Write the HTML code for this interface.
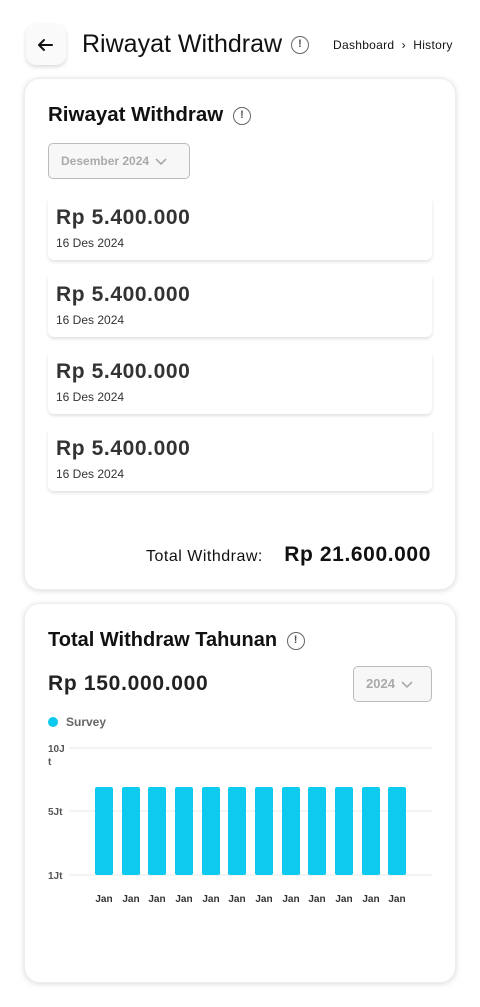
<!DOCTYPE html>
<html><head><meta charset="utf-8"><style>
*{box-sizing:border-box;margin:0;padding:0}
body{width:480px;height:1007px;background:#fff;font-family:"Liberation Sans",sans-serif;color:#222;position:relative;overflow:hidden}
.abs{position:absolute}
.card{position:absolute;left:24px;width:432px;background:#fff;border-radius:16px;box-shadow:0 1px 6px rgba(0,0,0,.15);border:1px solid #eee}
.info{display:inline-block;border:1.5px solid #666;border-radius:50%;text-align:center;color:#555;font-weight:bold;vertical-align:middle}
.item{position:absolute;left:48px;width:384px;height:64px;border-radius:6px;box-shadow:0 2px 3px rgba(0,0,0,.12)}
.item .a{position:absolute;left:8px;top:10px;font-size:21px;letter-spacing:0.6px;font-weight:bold;color:#333}
.item .d{position:absolute;left:8px;top:40px;font-size:12px;color:#333}
.sel{position:absolute;border:1px solid #bbb;border-radius:5px;background:#f7f7f8;color:#aaa;font-size:12px;font-weight:bold}
.sel svg{vertical-align:middle;margin-left:6px}
</style></head><body>
<div class="abs" style="left:26px;top:24px;width:40px;height:41px;border-radius:10px;background:#fafafa;box-shadow:0 2px 4px rgba(0,0,0,.15)">
<svg width="40" height="41" viewBox="0 0 40 41"><path d="M13 21h13M13 21l5-5M13 21l5 5" stroke="#111" stroke-width="2" fill="none" stroke-linecap="round"/></svg></div>
<div class="abs" style="left:82px;top:30px;font-size:25px;color:#111;white-space:nowrap">Riwayat Withdraw <span class="info" style="width:18px;height:18px;font-size:11px;line-height:15px;margin-left:2px">!</span></div>
<div class="abs" style="left:333px;top:38px;font-size:12px;letter-spacing:0.3px;color:#111">Dashboard &nbsp;›&nbsp; History</div>

<div class="card" style="top:78px;height:512px"></div>
<div class="abs" style="left:48px;top:103px;font-size:20.5px;font-weight:bold;color:#111;white-space:nowrap">Riwayat Withdraw <span class="info" style="width:18px;height:18px;font-size:11px;line-height:15px;margin-left:4px">!</span></div>
<div class="sel" style="left:48px;top:143px;width:142px;height:36px;line-height:34px;padding-left:12px">Desember 2024<svg width="12" height="8" viewBox="0 0 12 8"><path d="M1 1l5 5 5-5" stroke="#aaa" stroke-width="1.6" fill="none"/></svg></div>
<div class="item" style="top:196px"><div class="a">Rp 5.400.000</div><div class="d">16 Des 2024</div></div>
<div class="item" style="top:273px"><div class="a">Rp 5.400.000</div><div class="d">16 Des 2024</div></div>
<div class="item" style="top:350px"><div class="a">Rp 5.400.000</div><div class="d">16 Des 2024</div></div>
<div class="item" style="top:427px"><div class="a">Rp 5.400.000</div><div class="d">16 Des 2024</div></div>
<div class="abs" style="left:146px;top:548px;font-size:16px;letter-spacing:0.5px;color:#111">Total Withdraw:</div>
<div class="abs" style="right:49px;top:543px;font-size:21px;letter-spacing:0.6px;font-weight:bold;color:#111">Rp 21.600.000</div>

<div class="card" style="top:603px;height:380px"></div>
<div class="abs" style="left:48px;top:629px;font-size:20px;font-weight:bold;color:#111;white-space:nowrap">Total Withdraw Tahunan <span class="info" style="width:18px;height:18px;font-size:11px;line-height:15px;margin-left:4px">!</span></div>
<div class="abs" style="left:48px;top:672px;font-size:21px;letter-spacing:0.7px;font-weight:bold;color:#222">Rp 150.000.000</div>
<div class="sel" style="left:353px;top:666px;width:79px;height:36px;line-height:34px;padding-left:12px;font-size:13px">2024<svg width="12" height="8" viewBox="0 0 12 8"><path d="M1 1l5 5 5-5" stroke="#aaa" stroke-width="1.6" fill="none"/></svg></div>
<div class="abs" style="left:48px;top:717px;width:10px;height:10px;border-radius:50%;background:#0ec9ee"></div>
<div class="abs" style="left:66px;top:715px;font-size:12px;font-weight:bold;color:#666">Survey</div>
<svg class="abs" style="left:0;top:0" width="480" height="1007">
<g stroke="#e8e8e8" stroke-width="1"><line x1="69" y1="748" x2="432" y2="748"/><line x1="69" y1="811" x2="432" y2="811"/><line x1="69" y1="875" x2="432" y2="875"/></g>
<g font-family="Liberation Sans" font-size="10" font-weight="bold" fill="#555"><text x="48" y="752">10J</text><text x="48" y="765">t</text><text x="48" y="815">5Jt</text><text x="48" y="879">1Jt</text></g>
<g fill="#0ecaee">
<rect x="95" y="787" width="18" height="88" rx="2"/><rect x="122" y="787" width="18" height="88" rx="2"/><rect x="148" y="787" width="18" height="88" rx="2"/><rect x="175" y="787" width="18" height="88" rx="2"/><rect x="202" y="787" width="18" height="88" rx="2"/><rect x="228" y="787" width="18" height="88" rx="2"/><rect x="255" y="787" width="18" height="88" rx="2"/><rect x="282" y="787" width="18" height="88" rx="2"/><rect x="308" y="787" width="18" height="88" rx="2"/><rect x="335" y="787" width="18" height="88" rx="2"/><rect x="362" y="787" width="18" height="88" rx="2"/><rect x="388" y="787" width="18" height="88" rx="2"/>
</g>
<g font-family="Liberation Sans" font-size="10" font-weight="bold" fill="#333" text-anchor="middle">
<text x="104" y="902">Jan</text><text x="131" y="902">Jan</text><text x="157" y="902">Jan</text><text x="184" y="902">Jan</text><text x="211" y="902">Jan</text><text x="237" y="902">Jan</text><text x="264" y="902">Jan</text><text x="291" y="902">Jan</text><text x="317" y="902">Jan</text><text x="344" y="902">Jan</text><text x="371" y="902">Jan</text><text x="397" y="902">Jan</text>
</g></svg>
</body></html>
